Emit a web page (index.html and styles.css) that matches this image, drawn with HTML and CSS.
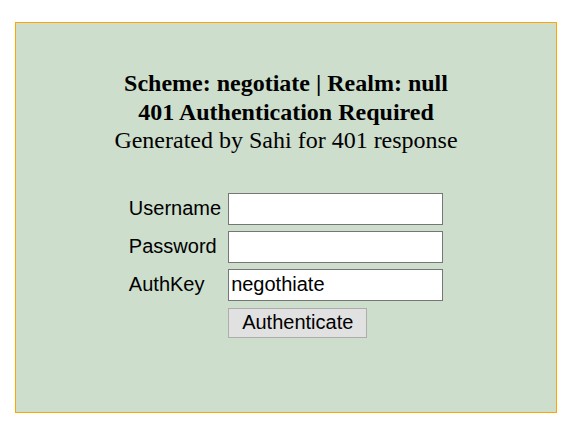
FILE: index.html
```html
<!DOCTYPE html>
<html>
<head>
<meta charset="utf-8">
<link rel="stylesheet" href="styles.css">
</head>
<body>
<div class="box">
  <div class="title">
    <b>Scheme: negotiate | Realm: null<br>401 Authentication Required</b><br>Generated by Sahi for 401 response
  </div>
  <form class="form">
    <label class="lbl">Username</label>
    <input class="field" type="text">
    <label class="lbl">Password</label>
    <input class="field" type="password">
    <label class="lbl">AuthKey</label>
    <input class="field" type="text" value="negothiate">
    <span></span>
    <div><button class="btn" type="button">Authenticate</button></div>
  </form>
</div>
</body>
</html>
```

FILE: styles.css
```css
html, body { margin: 0; padding: 0; background: #fff; }
body { padding: 22px 16px 0 15px; }
.box {
  box-sizing: border-box;
  height: 391px;
  background: #cddecc;
  border: 1px solid #ffa500;
  padding-top: 46px;
}
.title {
  font-family: "Liberation Serif", "Times New Roman", serif;
  font-size: 24px;
  line-height: 28.5px;
  text-align: center;
  color: #000;
}
.form {
  margin: 38px 0 0 0;
  display: grid;
  grid-template-columns: auto 215px;
  column-gap: 7px;
  row-gap: 6px;
  justify-content: center;
  align-items: center;
  font-family: "Liberation Sans", Arial, sans-serif;
  font-size: 20px;
}
.lbl { color: #000; }
.field {
  box-sizing: border-box;
  width: 215px;
  height: 32px;
  margin: 0;
  border: 1px solid #767676;
  padding: 0 2px;
  background: #fff;
  font-family: "Liberation Sans", Arial, sans-serif;
  font-size: 20px;
  color: #000;
  outline: none;
}
.btn {
  box-sizing: border-box;
  height: 30px;
  margin-top: 1px;
  padding: 0 13px;
  border: 1px solid #adadad;
  background: #e1e1e1;
  font-family: "Liberation Sans", Arial, sans-serif;
  font-size: 20px;
  color: #000;
  border-radius: 0;
}
```
